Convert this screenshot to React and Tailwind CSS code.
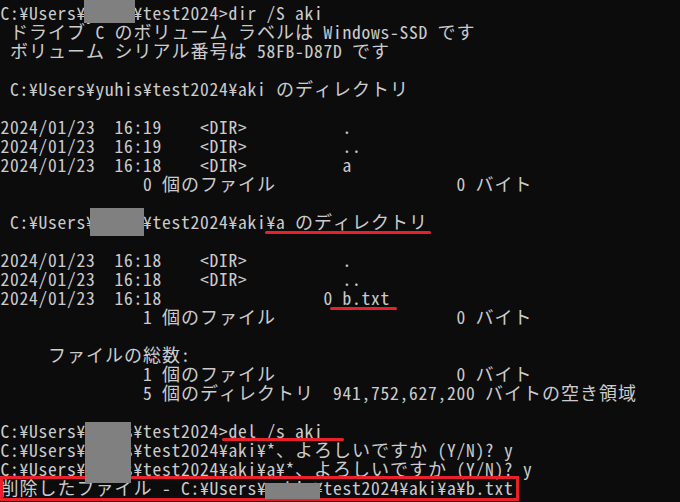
const WIDE = /[\u3000-\u30ff\u3400-\u9fff\uff01-\uff60]/;

const lines = [
  'C:¥Users¥yuhis¥test2024>dir /S aki',
  ' ドライブ C のボリューム ラベルは Windows-SSD です',
  ' ボリューム シリアル番号は 58FB-D87D です',
  '',
  ' C:¥Users¥yuhis¥test2024¥aki のディレクトリ',
  '',
  '2024/01/23  16:19    <DIR>          .',
  '2024/01/23  16:19    <DIR>          ..',
  '2024/01/23  16:18    <DIR>          a',
  '               0 個のファイル                   0 バイト',
  '',
  ' C:¥Users¥yuhis¥test2024¥aki¥a のディレクトリ',
  '',
  '2024/01/23  16:18    <DIR>          .',
  '2024/01/23  16:18    <DIR>          ..',
  '2024/01/23  16:18                 0 b.txt',
  '               1 個のファイル                   0 バイト',
  '',
  '     ファイルの総数:',
  '               1 個のファイル                   0 バイト',
  '               5 個のディレクトリ  941,752,627,200 バイトの空き領域',
  '',
  'C:¥Users¥yuhis¥test2024>del /s aki',
  'C:¥Users¥yuhis¥test2024¥aki¥*、よろしいですか (Y/N)? y',
  'C:¥Users¥yuhis¥test2024¥aki¥a¥*、よろしいですか (Y/N)? y',
  '削除したファイル - C:¥Users¥yuhis¥test2024¥aki¥a¥b.txt',
];

// console cells: half width 9.5px, full width 19px
function Cell({ ch }) {
  if (WIDE.test(ch)) {
    return (
      <span className="w-[19px] shrink-0 text-center font-['Noto_Sans_CJK_JP',sans-serif] text-[18px] leading-[19px]">
        {ch}
      </span>
    );
  }
  return <span className="w-[9.5px] shrink-0 text-center leading-[19px]">{ch}</span>;
}

function Line({ text }) {
  return (
    <div className="flex h-[19px] items-baseline whitespace-pre">
      {Array.from(text).map((ch, i) => (
        <Cell key={i} ch={ch} />
      ))}
    </div>
  );
}

export default function App() {
  return (
    <div className="relative flex h-[502px] w-[680px] flex-col overflow-hidden bg-[#0c0c0c] pt-[3px] font-['Noto_Sans_Mono_CJK_JP','DejaVu_Sans_Mono',monospace] text-[17.5px] text-[#cccccc]">
      {lines.map((t, i) => (
        <Line key={i} text={t} />
      ))}

      {/* red annotations drawn over the console */}
      <div className="absolute left-[265px] top-[231px] h-[3px] w-[166px] rounded-full bg-[#e8202a]" />
      <div className="absolute left-[330px] top-[307px] h-[3px] w-[67px] rounded-full bg-[#e8202a]" />
      <div className="absolute left-[222px] top-[438px] h-[3px] w-[122px] rounded-full bg-[#e8202a]" />
      <div className="absolute left-0 top-[476px] h-[25px] w-[519px] border-[3px] border-[#e8202a]" />

      {/* masked user name */}
      <div className="absolute left-[84px] top-0 h-[23px] w-[51px] bg-[#808080]" />
      <div className="absolute left-[90px] top-[208px] h-[28px] w-[54px] bg-[#808080]" />
      <div className="absolute left-[85px] top-[422px] h-[61px] w-[46px] bg-[#808080]" />
      <div className="absolute left-[265px] top-[483px] h-[16px] w-[55px] bg-[#808080]" />
    </div>
  );
}
